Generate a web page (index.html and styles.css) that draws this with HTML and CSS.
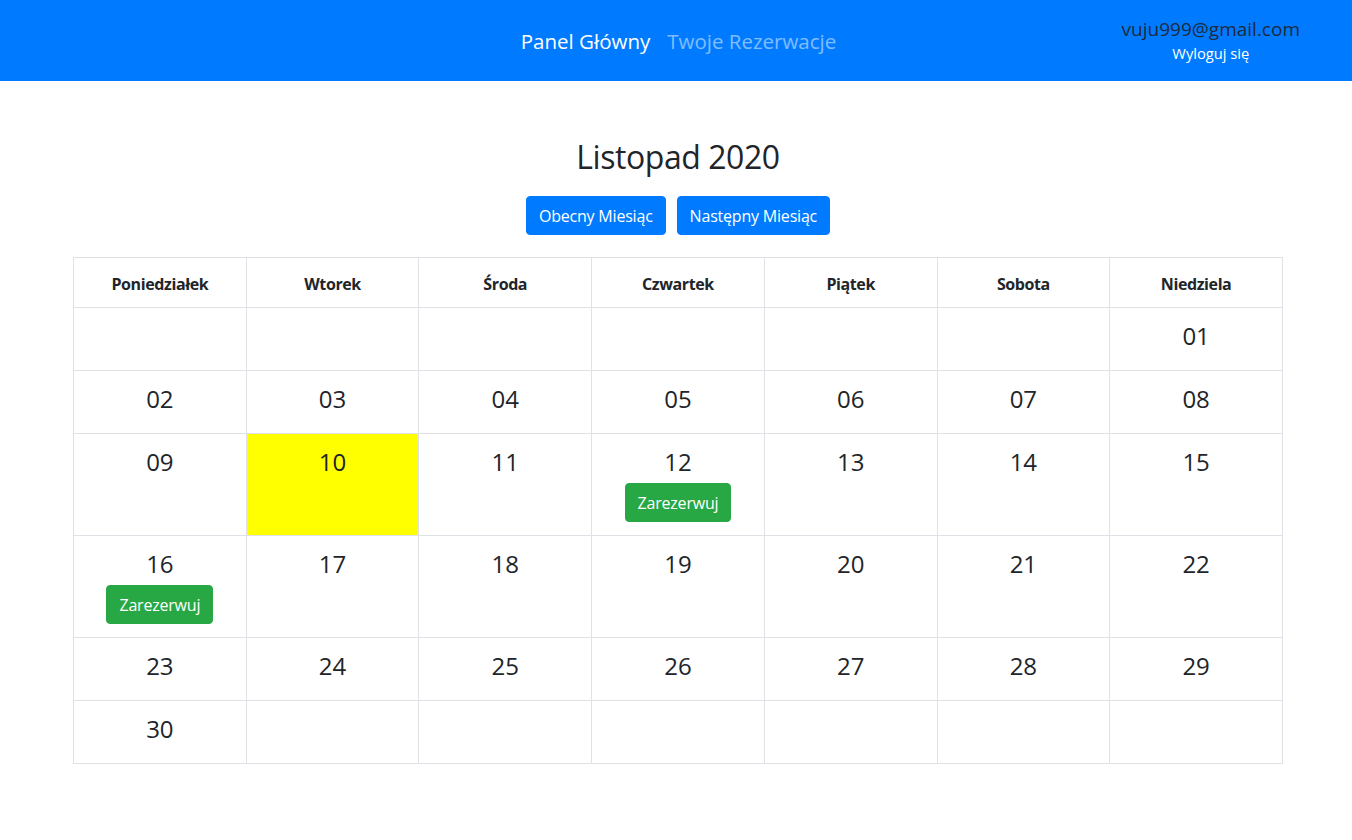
FILE: index.html
```html
<!DOCTYPE html>
<html lang="pl">
<head>
<meta charset="utf-8">
<title>Kalendarz</title>
<link rel="stylesheet" href="styles.css">
</head>
<body>
<header class="navbar">
  <div class="nav-spacer"></div>
  <nav class="nav-links">
    <a class="nav-link active" href="#">Panel Główny</a>
    <a class="nav-link" href="#">Twoje Rezerwacje</a>
  </nav>
  <div class="user">
    <div class="user-email">vuju999@gmail.com</div>
    <a class="logout" href="#">Wyloguj się</a>
  </div>
</header>
<main class="main">
  <h2 class="month-title">Listopad 2020</h2>
  <div class="month-buttons">
    <button class="btn btn-primary">Obecny Miesiąc</button>
    <button class="btn btn-primary">Następny Miesiąc</button>
  </div>
  <table class="calendar">
    <thead>
      <tr>
        <th>Poniedziałek</th><th>Wtorek</th><th>Środa</th><th>Czwartek</th><th>Piątek</th><th>Sobota</th><th>Niedziela</th>
      </tr>
    </thead>
    <tbody>
      <tr>
        <td></td><td></td><td></td><td></td><td></td><td></td>
        <td><div class="day">01</div></td>
      </tr>
      <tr>
        <td><div class="day">02</div></td>
        <td><div class="day">03</div></td>
        <td><div class="day">04</div></td>
        <td><div class="day">05</div></td>
        <td><div class="day">06</div></td>
        <td><div class="day">07</div></td>
        <td><div class="day">08</div></td>
      </tr>
      <tr>
        <td><div class="day">09</div></td>
        <td class="today"><div class="day">10</div></td>
        <td><div class="day">11</div></td>
        <td><div class="day">12</div><button class="btn btn-success">Zarezerwuj</button></td>
        <td><div class="day">13</div></td>
        <td><div class="day">14</div></td>
        <td><div class="day">15</div></td>
      </tr>
      <tr>
        <td><div class="day">16</div><button class="btn btn-success">Zarezerwuj</button></td>
        <td><div class="day">17</div></td>
        <td><div class="day">18</div></td>
        <td><div class="day">19</div></td>
        <td><div class="day">20</div></td>
        <td><div class="day">21</div></td>
        <td><div class="day">22</div></td>
      </tr>
      <tr>
        <td><div class="day">23</div></td>
        <td><div class="day">24</div></td>
        <td><div class="day">25</div></td>
        <td><div class="day">26</div></td>
        <td><div class="day">27</div></td>
        <td><div class="day">28</div></td>
        <td><div class="day">29</div></td>
      </tr>
      <tr>
        <td><div class="day">30</div></td>
        <td></td><td></td><td></td><td></td><td></td><td></td>
      </tr>
    </tbody>
  </table>
</main>
</body>
</html>
```

FILE: styles.css
```css
* { box-sizing: border-box; }
html, body {
  margin: 0;
  padding: 0;
}
body {
  font-family: "Open Sans", "Noto Sans", sans-serif;
  color: #212529;
  background: #fff;
  font-size: 16px;
  line-height: 1.5;
}
.navbar {
  height: 81px;
  background: #007bff;
  display: grid;
  grid-template-columns: 1fr auto 1fr;
  align-items: center;
}
.nav-links {
  display: flex;
  gap: 17px;
  padding-top: 1px;
  padding-left: 5px;
}
.nav-link {
  font-size: 20.5px;
  color: rgba(255, 255, 255, 0.5);
  text-decoration: none;
  line-height: 30px;
}
.nav-link.active { color: #fff; }
.user {
  justify-self: end;
  text-align: center;
  padding-right: 52px;
  display: flex;
  flex-direction: column;
  align-items: center;
  padding-top: 1px;
}
.user-email {
  font-size: 19px;
  line-height: 24px;
  color: #1d2a3c;
}
.logout {
  font-size: 14.7px;
  line-height: 24px;
  color: #fff;
  text-decoration: none;
}
.main {
  padding: 57px 69px 40px 73px;
}
.month-title {
  margin: 0;
  font-size: 32px;
  font-weight: 400;
  line-height: 38px;
  letter-spacing: -0.45px;
  text-align: center;
}
.month-buttons {
  display: flex;
  justify-content: center;
  gap: 11px;
  margin-top: 20px;
  margin-bottom: 22px;
}
.btn {
  font-family: inherit;
  font-size: 16px;
  line-height: 24px;
  padding: 6.5px 12px;
  border: 1px solid transparent;
  border-radius: 4px;
  color: #fff;
  letter-spacing: -0.2px;
  cursor: pointer;
}
.btn-primary { background: #007bff; border-color: #007bff; }
.btn-success { background: #28a745; border-color: #28a745; }
.calendar {
  width: 1210px;
  border-collapse: collapse;
  table-layout: fixed;
}
.calendar th,
.calendar td {
  border: 1px solid #dee2e6;
  text-align: center;
  vertical-align: top;
}
.calendar th {
  font-size: 16px;
  font-weight: 700;
  line-height: 24px;
  letter-spacing: -0.4px;
  padding: 14px 8px 11px;
}
.calendar td {
  padding: 10px 8px 13px;
  height: 63px;
}
.calendar td.today { background: #ffff00; }
.day {
  font-size: 24px;
  line-height: 36px;
  margin-bottom: 3px;
}
```
